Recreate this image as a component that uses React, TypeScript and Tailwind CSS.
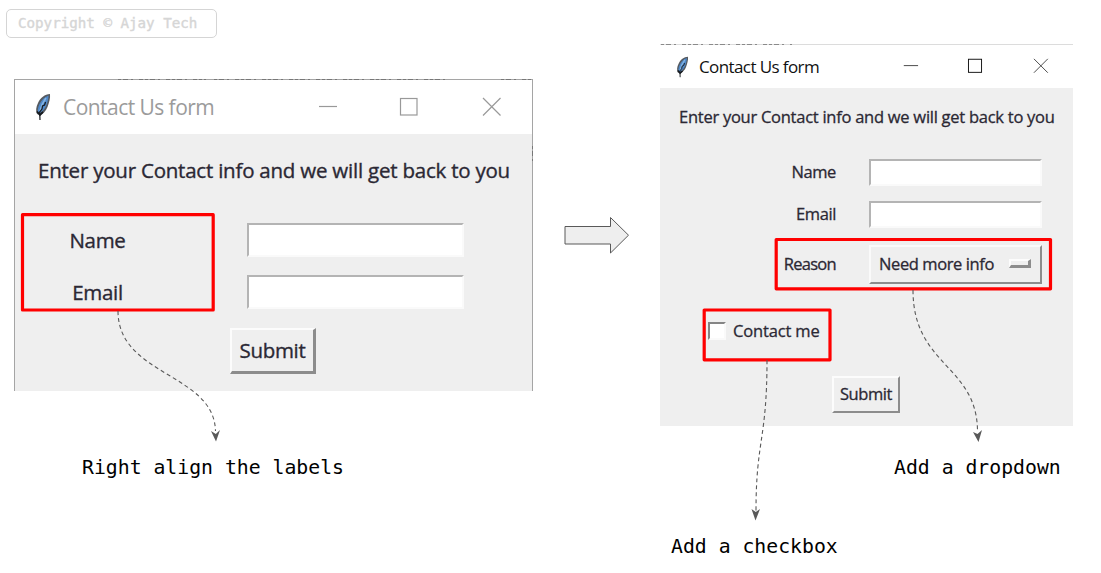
import React from "react";

function Feather({ className }: { className: string }) {
  return (
    <svg className={className} viewBox="0 0 16 28" fill="none">
      <path d="M15 1 C10 1 5 5 3 10 C1 14 0.5 18 2 21 L4.5 22 C8 21 11 18 12.5 14 C14 10 15.5 5 15 1Z" fill="#555a60" />
      <path d="M13.5 2.5 C9.5 4 6.5 7 4.5 11 C3 14 2.5 17 3 19.5 L5 20 C8 18 10.5 15 11.5 12 C12.7 8.5 13.6 5.5 13.5 2.5Z" fill="#4f88c8" />
      <path d="M11 5 C8 9 6 13 5 18" stroke="#83b4e4" strokeWidth="1.6" />
      <path d="M10.5 9 L9.6 12 L7.5 13 L7 16 L4.7 19 L5 27" stroke="#15191e" strokeWidth="1.2" />
      <path d="M2 18.5 L5 22 L8 19" stroke="#15191e" strokeWidth="1.8" />
    </svg>
  );
}

function Controls({ className, color, maxColor }: { className: string; color: string; maxColor: string }) {
  return (
    <svg className={className} viewBox="0 0 184 20" fill="none" stroke={color} strokeWidth="1.2">
      <path d="M1 9.5 H19" />
      <rect x="82.5" y="1.5" width="16.5" height="16.5" stroke={maxColor} />
      <path d="M165 1 L182.5 18.5 M182.5 1 L165 18.5" />
    </svg>
  );
}

function Entry({ className }: { className: string }) {
  return <div className={`border-2 border-t-[#b4b4b4] border-l-[#b4b4b4] border-r-[#fafafa] border-b-[#fafafa] bg-white ${className}`} />;
}

function SubmitButton({ className }: { className: string }) {
  return (
    <button className={`flex items-center justify-center border-t-2 border-l-2 border-t-[#fcfcfc] border-l-[#fcfcfc] border-r-[#8c8c8c] border-b-[#8c8c8c] bg-[#efefef] whitespace-nowrap ${className}`}>
      Submit
    </button>
  );
}

function BeforeWindow() {
  return (
    <section className="absolute left-[14px] top-[79px] flex h-[312px] w-[519px] flex-col border-x border-t border-[#a5a5a5] bg-[#efefef] text-[20.5px] tracking-[-0.3px] text-[#2b2834] [-webkit-text-stroke:0.35px_#2b2834]">
      <header className="flex h-[54px] shrink-0 items-center bg-white pl-[20px] [-webkit-text-stroke:0px]">
        <Feather className="h-[28px] w-[16px] shrink-0" />
        <h2 className="ml-[12px] w-[255px] shrink-0 whitespace-nowrap text-[21px] leading-[54px] tracking-[-0.55px] text-[#9b9b9b]">Contact Us form</h2>
        <Controls className="h-[20px] w-[184px] shrink-0" color="#999999" maxColor="#999999" />
      </header>
      <p className="ml-[23px] mt-[21px] h-[31px] whitespace-nowrap leading-[30px] tracking-[-0.22px]">Enter your Contact info and we will get back to you</p>
      <div className="mt-[37px] flex h-[34px] items-center">
        <label className="w-[165px] text-center">Name</label>
        <Entry className="ml-[67px] h-[34px] w-[217px]" />
      </div>
      <div className="mt-[18px] flex h-[34px] items-center">
        <label className="w-[165px] text-center">Email</label>
        <Entry className="ml-[67px] h-[34px] w-[217px]" />
      </div>
      <SubmitButton className="ml-[215px] mt-[19px] h-[46px] w-[86px] border-r-3 border-b-3" />
    </section>
  );
}

function AfterWindow() {
  return (
    <section className="absolute left-[660px] top-[44px] flex h-[382px] w-[413px] flex-col border-t border-[#dcdcdc] bg-[#efefef] text-[16.5px] tracking-[-0.4px] text-[#2b2834] [-webkit-text-stroke:0.3px_#2b2834]">
      <header className="flex h-[43px] shrink-0 items-center bg-white pl-[16px] [-webkit-text-stroke:0px]">
        <Feather className="h-[22px] w-[13px] shrink-0" />
        <h2 className="ml-[10px] w-[204px] shrink-0 whitespace-nowrap text-[17px] leading-[43px] tracking-[-0.6px] text-[#111]">Contact Us form</h2>
        <Controls className="-mt-px h-[16px] w-[146px] shrink-0" color="#444444" maxColor="#111111" />
      </header>
      <p className="ml-[19px] mt-[17px] h-[24px] whitespace-nowrap leading-[24px] tracking-[-0.26px]">Enter your Contact info and we will get back to you</p>
      <div className="mt-[30px] flex h-[27px] items-center">
        <label className="w-[176px] text-right">Name</label>
        <Entry className="ml-[33px] h-[27px] w-[173px]" />
      </div>
      <div className="mt-[15px] flex h-[27px] items-center">
        <label className="w-[176px] text-right">Email</label>
        <Entry className="ml-[33px] h-[27px] w-[173px]" />
      </div>
      <div className="mt-[17px] flex h-[39px] items-center">
        <label className="w-[176px] text-right tracking-[-0.7px]">Reason</label>
        <button className="ml-[33px] flex h-[39px] w-[173px] items-center border-2 border-t-[#fafafa] border-l-[#fafafa] border-r-[#8c8c8c] border-b-[#8c8c8c] pl-[8px] text-left">
          <span className="w-[130px] whitespace-nowrap tracking-[-0.4px]">Need more info</span>
          <span className="-mt-[2px] h-[9px] w-[22px] shrink-0 border-t-2 border-l-2 border-r-[3px] border-b-[3px] border-t-[#fcfcfc] border-l-[#fcfcfc] border-r-[#8c8c8c] border-b-[#8c8c8c]" />
        </button>
      </div>
      <div className="ml-[48px] mt-[33px] flex h-[28px] items-center">
        <span className="h-[18px] w-[18px] border-2 border-t-[#858585] border-l-[#858585] border-r-[#fafafa] border-b-[#fafafa] bg-white" />
        <label className="ml-[7px] whitespace-nowrap tracking-[-0.15px]">Contact me</label>
      </div>
      <SubmitButton className="ml-[172px] mt-[31px] h-[37px] w-[68px] border-r-2 border-b-2" />
    </section>
  );
}

function Annotations() {
  return (
    <svg className="pointer-events-none absolute left-0 top-0 h-[573px] w-[1101px]" viewBox="0 0 1101 573" fill="none">
      <g stroke="#777777" strokeDasharray="3 2 5 3 2 6 4 2">
        <path d="M118 79.5 H206" />
        <path d="M214 79.5 H448" />
        <path d="M501 79.5 H532" />
        <path d="M661 44.5 H792" stroke="#8a8a8a" />
        <path d="M532.5 146 V163" />
      </g>
      <path d="M565 226.5 H610.5 V217.5 L628.5 235.2 L610.5 253 V244 H565Z" fill="#eeeeee" stroke="#595959" />
      <g stroke="#ff0000" strokeWidth="3.2" strokeLinejoin="round">
        <rect x="22.5" y="214.7" width="190.7" height="95.3" />
        <rect x="776.2" y="239.5" width="274.3" height="49.3" />
        <rect x="704.2" y="310" width="125.8" height="49.8" />
      </g>
      <g stroke="#595959" strokeWidth="1.1" strokeDasharray="4 3">
        <path d="M118 311 C118 376 214 373 215.5 431" />
        <path d="M767 360 C767 440 756 440 756 511" />
        <path d="M913 290 C913 366 977 365 977.5 431" />
      </g>
      <g fill="#595959">
        <path d="M211 431 L215.8 434 L220 430 L216 441.5Z" />
        <path d="M751.5 509 L755.8 512 L760 509 L755.5 520.5Z" />
        <path d="M973 432 L977.5 434 L982 430 L978.5 442Z" />
      </g>
    </svg>
  );
}

export default function App() {
  return (
    <main className="relative h-[573px] w-[1101px] overflow-hidden bg-white font-['Open_Sans',sans-serif]">
      <div className="absolute left-[6px] top-[9px] flex h-[29px] w-[211px] items-center rounded-[5px] border border-[#d5d5d5] pt-px pl-[11px] font-['DejaVu_Sans_Mono',monospace] text-[14.2px] whitespace-nowrap text-[#d6d6d6] [-webkit-text-stroke:0.4px_#d6d6d6]">
        Copyright © Ajay Tech
      </div>
      <BeforeWindow />
      <AfterWindow />
      <Annotations />
      <div className="font-['DejaVu_Sans_Mono',monospace] text-[19.8px] leading-[28px] whitespace-nowrap text-black">
        <p className="absolute left-[82px] top-[454px]">Right align the labels</p>
        <p className="absolute left-[671px] top-[533px]">Add a checkbox</p>
        <p className="absolute left-[894px] top-[454px]">Add a dropdown</p>
      </div>
    </main>
  );
}
